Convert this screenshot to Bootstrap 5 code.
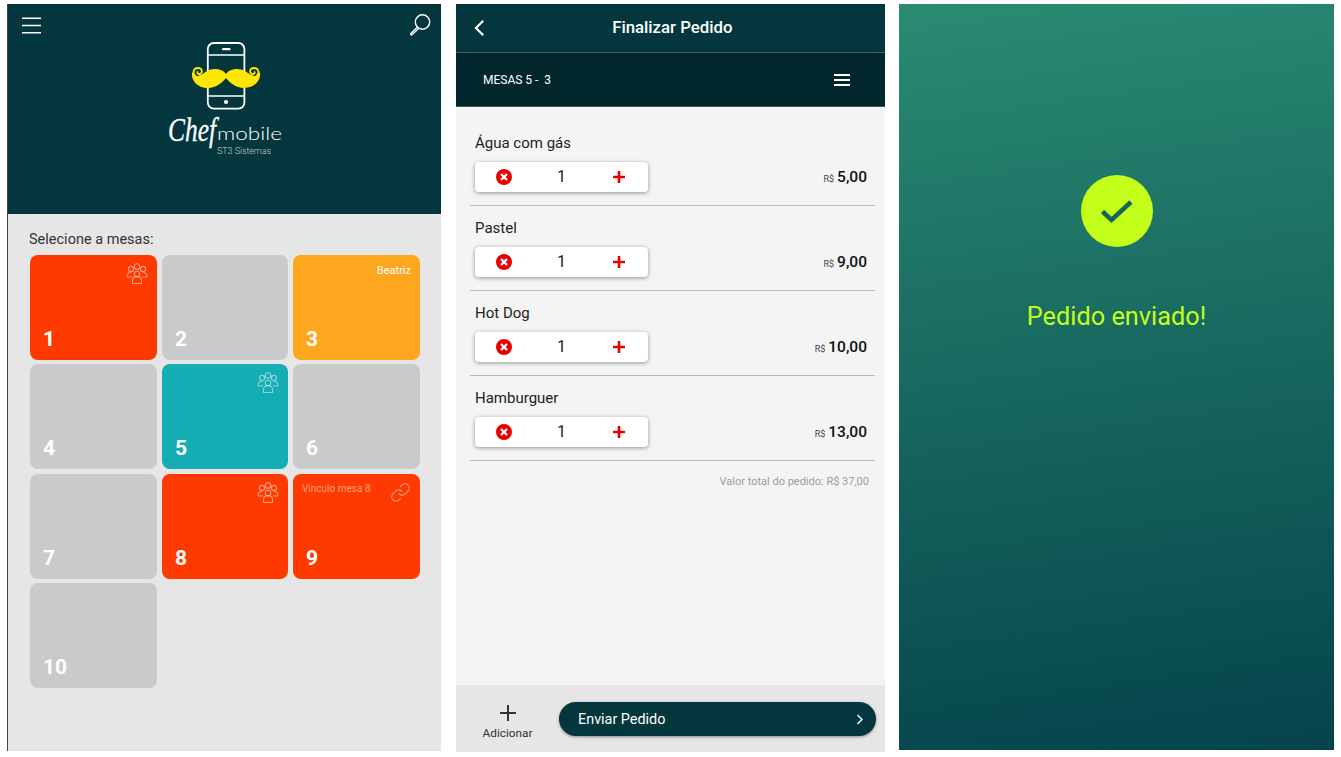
<!DOCTYPE html>
<html lang="pt-BR">
<head>
<meta charset="utf-8">
<title>Chef Mobile</title>
<link href="https://cdn.jsdelivr.net/npm/bootstrap@5.3.0/dist/css/bootstrap.min.css" rel="stylesheet">
<style>
html,body{height:757px;overflow:hidden;background:#fff;font-family:Roboto,"Liberation Sans",sans-serif}
.screens{padding:4px 0 0 7px;height:757px}
.scr-tables{width:434px;height:747px;background:#e6e6e6;border-left:1px solid #3a4750}
.scr-order{width:429px;height:748px;margin-left:15px;background:#f4f4f4}
.scr-done{width:435px;height:746px;margin-left:14px;background:linear-gradient(172deg,#2a8b72 0%,#04434b 100%)}
.home-head{height:210px;background:#03363d;padding:0 10px 0 14px}
.home-top{height:42px}
.logo-wrap{margin-top:-8px;height:132px}
.logo-wrap svg{margin-left:-3px}
.pick-body{padding:15px 21px 0 22px}
.pick-label{font-size:14.5px;line-height:21px;color:#333;margin-bottom:4.8px;margin-left:-1px}
.tile-grid{display:grid;grid-template-columns:127px 126px 127px;grid-auto-rows:105px;gap:4.5px 5px}
.tile{border-radius:8px;padding:8px 9px 9px 13px;color:#fff;background:#c9cacc}
.tile-red{background:#ff3a00}
.tile-teal{background:#14adb4}
.tile-amber{background:#fda61e}
.tile-num{font-size:21px;font-weight:700;line-height:24px;margin-bottom:0;margin-top:auto}
.tile-name{font-size:11px;line-height:16px;text-align:right}
.tile-link{font-size:10px;line-height:14px;color:rgba(255,255,255,.5);margin:0 0 0 -4px}
.tile-ico{stroke:rgba(255,255,255,.5);fill:none;stroke-width:1.1}
.order-head{height:49px;background:#03363d;border-bottom:1px solid #3c5e63;padding:0 0 0 18px;color:#fff}
.order-title{font-size:16.8px;font-weight:500;width:100%;text-align:center;padding-right:25px}
.order-sub{height:54px;background:#01272d;color:#fff;font-size:12px;padding:0 35px 0 27px;border-bottom:1px solid #3c5e63}
.order-list{padding:14px 10px 0 14px}
.order-row{height:85px;border-bottom:1px solid #b9b9b9;padding:11px 0 0 5px}
.order-name{font-size:15px;line-height:22px;color:#222;margin-bottom:8px}
.stepper{width:173px;height:30px;background:#fff;border-radius:4px;padding:0 22px 0 21px;box-shadow:0 1px 4px rgba(0,0,0,.4);font-size:16px;color:#222}
.stepper span{margin-left:-1px}
.price{font-size:15.5px;font-weight:500;color:#111;margin-right:8px;margin-top:4px}
.price-cur{font-size:9px;font-weight:400;color:#444;margin-right:3px}
.order-total{font-size:11px;color:#9c9c9c;text-align:right;margin:13px 6px 0 0;line-height:16px}
.order-foot{height:67px;background:#e6e6e6;padding:0 9px 0 0}
.add-btn{width:103px;font-size:11.8px;color:#333;line-height:14px;margin-top:6px}
.send-btn{height:34px;border-radius:17px;border:0;background:#03363d;color:#fff;font-size:14.4px;padding:0 12px 0 19px;box-shadow:0 1px 3px rgba(0,0,0,.4);margin-top:1px}
.send-btn span{padding-top:1px}
.send-btn:hover,.send-btn:active{background:#03363d;color:#fff}
.ok-circle{width:72px;height:72px;border-radius:50%;background:#c3ff1a;margin-top:171px}
.ok-text{font-size:25.3px;color:#c3ff1a;line-height:30px;margin-top:55px}
</style>
</head>
<body>
<div class="screens d-flex align-items-start">

  <section class="scr-tables d-flex flex-column">
    <header class="home-head">
      <div class="home-top d-flex justify-content-between align-items-center">
        <svg width="20" height="17" viewBox="0 0 20 17" aria-hidden="true"><path d="M0 1.2h19M0 8.5h19M0 15.8h19" stroke="#fff" stroke-width="1.5"/></svg>
        <svg width="22" height="22" viewBox="0 0 22 22" aria-hidden="true"><circle cx="13.500" cy="8" r="7.200" fill="none" stroke="#fff" stroke-width="1.400"/><path d="M8.300 13.200 2 19.300c-.8.8 0 2 1 1.400l6.600-6.200" fill="none" stroke="#fff" stroke-width="1.300"/></svg>
      </div>
      <div class="logo-wrap d-flex justify-content-center">
        <svg width="130" height="122" viewBox="160 38 130 122" role="img" aria-label="Chef mobile">
          <rect x="207.800" y="43" width="36.600" height="65.600" rx="6" fill="none" stroke="#fff" stroke-width="1.800"/>
          <path d="M208 55h36M208 96h36" stroke="#fff" stroke-width="1.500"/>
          <rect x="222" y="48" width="8.500" height="2.200" rx="1" fill="#fff"/>
          <circle cx="226" cy="102" r="2.100" fill="#fff"/>
          <g>
            <path d="M226 74C222 68 212 68 207 71 203 74 199 76 196 76 194 75 193.500 73 194 71L192 73C191 80 197 88 208 88 216 88 223 82 226 78Z" fill="#ffe600"/>
            <path d="M196 76C192 74 193 68 198 68 203 68 203 74 199 74 197 74 197 72 198 71.500" fill="none" stroke="#ffe600" stroke-width="1.800"/>
          </g>
          <g transform="translate(452 0) scale(-1 1)">
            <path d="M226 74C222 68 212 68 207 71 203 74 199 76 196 76 194 75 193.500 73 194 71L192 73C191 80 197 88 208 88 216 88 223 82 226 78Z" fill="#ffe600"/>
            <path d="M196 76C192 74 193 68 198 68 203 68 203 74 199 74 197 74 197 72 198 71.500" fill="none" stroke="#ffe600" stroke-width="1.800"/>
          </g>
          <text transform="translate(168 141) scale(.77 1)" font-family="Liberation Serif,serif" font-style="italic" font-size="33" fill="#fff" stroke="#fff" stroke-width=".3">Chef</text>
          <text x="217" y="140" font-family="Lato,sans-serif" font-weight="300" font-size="18" fill="#fff" textLength="65" lengthAdjust="spacingAndGlyphs">mobile</text>
          <text x="217" y="153.500" font-family="Roboto,sans-serif" font-weight="300" font-size="9" fill="#c9d2d3" textLength="54" lengthAdjust="spacingAndGlyphs">ST3 Sistemas</text>
        </svg>
      </div>
    </header>
    <div class="pick-body">
      <p class="pick-label">Selecione a mesas:</p>
      <div class="tile-grid">
        <div class="tile tile-red d-flex flex-column">
          <div class="d-flex justify-content-end"><svg class="tile-ico" width="22" height="21" viewBox="0 0 22 21" aria-hidden="true"><circle cx="11" cy="3.600" r="2.800"/><circle cx="5" cy="6" r="2.600"/><circle cx="17" cy="6" r="2.600"/><circle cx="11" cy="11" r="2.800"/><path d="M1 14c0-3 1.500-4.500 4-5M21 14c0-3-1.500-4.500-4-5M1 14h5M21 14h-5M6.500 20.500v-3c0-2.300 1.800-3.800 4.500-3.800s4.500 1.500 4.500 3.800v3z"/></svg></div>
          <p class="tile-num">1</p>
        </div>
        <div class="tile d-flex flex-column"><p class="tile-num">2</p></div>
        <div class="tile tile-amber d-flex flex-column">
          <div class="tile-name">Beatriz</div>
          <p class="tile-num">3</p>
        </div>
        <div class="tile d-flex flex-column"><p class="tile-num">4</p></div>
        <div class="tile tile-teal d-flex flex-column">
          <div class="d-flex justify-content-end"><svg class="tile-ico" width="22" height="21" viewBox="0 0 22 21" aria-hidden="true"><circle cx="11" cy="3.600" r="2.800"/><circle cx="5" cy="6" r="2.600"/><circle cx="17" cy="6" r="2.600"/><circle cx="11" cy="11" r="2.800"/><path d="M1 14c0-3 1.500-4.500 4-5M21 14c0-3-1.500-4.500-4-5M1 14h5M21 14h-5M6.500 20.500v-3c0-2.300 1.800-3.800 4.500-3.800s4.500 1.500 4.500 3.800v3z"/></svg></div>
          <p class="tile-num">5</p>
        </div>
        <div class="tile d-flex flex-column"><p class="tile-num">6</p></div>
        <div class="tile d-flex flex-column"><p class="tile-num">7</p></div>
        <div class="tile tile-red d-flex flex-column">
          <div class="d-flex justify-content-end"><svg class="tile-ico" width="22" height="21" viewBox="0 0 22 21" aria-hidden="true"><circle cx="11" cy="3.600" r="2.800"/><circle cx="5" cy="6" r="2.600"/><circle cx="17" cy="6" r="2.600"/><circle cx="11" cy="11" r="2.800"/><path d="M1 14c0-3 1.500-4.500 4-5M21 14c0-3-1.500-4.500-4-5M1 14h5M21 14h-5M6.500 20.500v-3c0-2.300 1.800-3.800 4.500-3.800s4.500 1.500 4.500 3.800v3z"/></svg></div>
          <p class="tile-num">8</p>
        </div>
        <div class="tile tile-red d-flex flex-column">
          <div class="d-flex justify-content-between align-items-start">
            <span class="tile-link">Vínculo mesa 8</span>
            <svg class="tile-ico" width="21" height="21" viewBox="0 0 24 24" aria-hidden="true"><path d="M10 13a5 5 0 0 0 7.540.54l3-3a5 5 0 0 0-7.070-7.070l-1.720 1.710M14 11a5 5 0 0 0-7.540-.54l-3 3a5 5 0 0 0 7.070 7.070l1.710-1.710" stroke-width="1.300"/></svg>
          </div>
          <p class="tile-num">9</p>
        </div>
        <div class="tile d-flex flex-column"><p class="tile-num">10</p></div>
      </div>
    </div>
  </section>

  <section class="scr-order d-flex flex-column">
    <header class="order-head d-flex align-items-center">
      <svg width="11" height="18" viewBox="0 0 11 18" aria-hidden="true"><path d="M9.500 1.500 2 9l7.500 7.500" fill="none" stroke="#fff" stroke-width="2.200"/></svg>
      <div class="order-title">Finalizar Pedido</div>
    </header>
    <div class="order-sub d-flex justify-content-between align-items-center">
      <span>MESAS 5 -&nbsp; 3</span>
      <svg width="16" height="12" viewBox="0 0 16 12" aria-hidden="true"><path d="M0 1h16M0 6h16M0 11h16" stroke="#fff" stroke-width="1.800"/></svg>
    </div>
    <div class="order-list">
      <div class="order-row">
        <div class="order-name">Água com gás</div>
        <div class="d-flex justify-content-between">
          <div class="stepper d-flex justify-content-between align-items-center">
            <svg width="16" height="16" viewBox="0 0 16 16" aria-hidden="true"><circle cx="8" cy="8" r="8" fill="#e60000"/><path d="M5 5l6 6M11 5l-6 6" stroke="#fff" stroke-width="2.300"/></svg>
            <span>1</span>
            <svg width="14" height="14" viewBox="0 0 14 14" aria-hidden="true"><path d="M7 1v12M1 7h12" stroke="#e60000" stroke-width="2.600"/></svg>
          </div>
          <div class="price"><span class="price-cur">R$</span>5,00</div>
        </div>
      </div>
      <div class="order-row">
        <div class="order-name">Pastel</div>
        <div class="d-flex justify-content-between">
          <div class="stepper d-flex justify-content-between align-items-center">
            <svg width="16" height="16" viewBox="0 0 16 16" aria-hidden="true"><circle cx="8" cy="8" r="8" fill="#e60000"/><path d="M5 5l6 6M11 5l-6 6" stroke="#fff" stroke-width="2.300"/></svg>
            <span>1</span>
            <svg width="14" height="14" viewBox="0 0 14 14" aria-hidden="true"><path d="M7 1v12M1 7h12" stroke="#e60000" stroke-width="2.600"/></svg>
          </div>
          <div class="price"><span class="price-cur">R$</span>9,00</div>
        </div>
      </div>
      <div class="order-row">
        <div class="order-name">Hot Dog</div>
        <div class="d-flex justify-content-between">
          <div class="stepper d-flex justify-content-between align-items-center">
            <svg width="16" height="16" viewBox="0 0 16 16" aria-hidden="true"><circle cx="8" cy="8" r="8" fill="#e60000"/><path d="M5 5l6 6M11 5l-6 6" stroke="#fff" stroke-width="2.300"/></svg>
            <span>1</span>
            <svg width="14" height="14" viewBox="0 0 14 14" aria-hidden="true"><path d="M7 1v12M1 7h12" stroke="#e60000" stroke-width="2.600"/></svg>
          </div>
          <div class="price"><span class="price-cur">R$</span>10,00</div>
        </div>
      </div>
      <div class="order-row">
        <div class="order-name">Hamburguer</div>
        <div class="d-flex justify-content-between">
          <div class="stepper d-flex justify-content-between align-items-center">
            <svg width="16" height="16" viewBox="0 0 16 16" aria-hidden="true"><circle cx="8" cy="8" r="8" fill="#e60000"/><path d="M5 5l6 6M11 5l-6 6" stroke="#fff" stroke-width="2.300"/></svg>
            <span>1</span>
            <svg width="14" height="14" viewBox="0 0 14 14" aria-hidden="true"><path d="M7 1v12M1 7h12" stroke="#e60000" stroke-width="2.600"/></svg>
          </div>
          <div class="price"><span class="price-cur">R$</span>13,00</div>
        </div>
      </div>
      <div class="order-total">Valor total do pedido: R$ 37,00</div>
    </div>
    <footer class="order-foot mt-auto d-flex align-items-center">
      <div class="add-btn d-flex flex-column align-items-center">
        <svg width="18" height="18" viewBox="0 0 18 18" aria-hidden="true"><path d="M9 1v16M1 9h16" stroke="#333" stroke-width="2"/></svg>
        <span class="mt-1">Adicionar</span>
      </div>
      <button type="button" class="btn send-btn flex-grow-1 d-flex justify-content-between align-items-center">
        <span>Enviar Pedido</span>
        <svg width="8" height="11" viewBox="0 0 8 11" aria-hidden="true"><path d="M1.500 1 6 5.500 1.500 10" fill="none" stroke="#fff" stroke-width="1.400"/></svg>
      </button>
    </footer>
  </section>

  <section class="scr-done d-flex flex-column align-items-center">
    <div class="ok-circle d-flex justify-content-center align-items-center">
      <svg width="34" height="26" viewBox="0 0 34 26" aria-hidden="true"><path d="M2.500 13.500 11.500 22 31 4" fill="none" stroke="#15655f" stroke-width="4.500"/></svg>
    </div>
    <div class="ok-text">Pedido enviado!</div>
  </section>
</div>
<script src="https://cdn.jsdelivr.net/npm/bootstrap@5.3.0/dist/js/bootstrap.bundle.min.js"></script>
</body>
</html>
